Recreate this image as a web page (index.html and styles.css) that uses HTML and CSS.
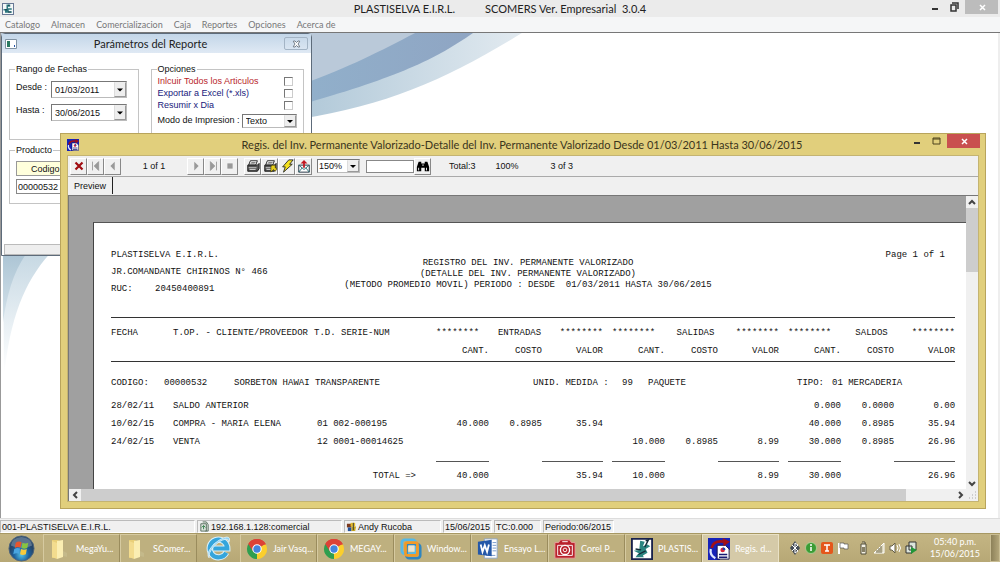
FILE: index.html
```html
<!DOCTYPE html>
<html lang="es">
<head>
<meta charset="utf-8">
<title>SCOMERS Ver. Empresarial</title>
<link rel="stylesheet" href="styles.css">
</head>
<body>
<svg class="defs" aria-hidden="true">
  <defs>
    <symbol id="i-down" viewBox="0 0 10 10"><path d="M2 4h6L5 7z" fill="#000"/></symbol>
    <symbol id="i-folder" viewBox="0 0 22 22">
      <path d="M3 2h6l2 2v16H3z" fill="#e9cf78"/><path d="M8 3l6-1v17l-6 2z" fill="#fbeeb2"/>
      <path d="M3 3l5 2v16l-5-2z" fill="#f3dc8e"/><path d="M14 13l4 2v4l-4-1z" fill="#c4b98a"/>
    </symbol>
    <symbol id="i-chrome" viewBox="0 0 24 24">
      <path d="M12 12L2.500 6.500A11 11 0 0 1 21.500 6.500z" fill="#dd4236"/>
      <path d="M12 12L21.500 6.500A11 11 0 0 1 12 23z" fill="#fbcf2c"/>
      <path d="M12 12L12 23A11 11 0 0 1 2.500 6.500z" fill="#2f9e4f"/>
      <path d="M12 7h9.800A11 11 0 0 0 2.500 6.500L7.500 14.500z" fill="#dd4236"/>
      <circle cx="12" cy="12" r="5.200" fill="#fff"/><circle cx="12" cy="12" r="4" fill="#4384dd"/>
    </symbol>
    <symbol id="i-app" viewBox="0 0 16 16">
      <path d="M.5.5h15v15H.5z" fill="#f4f8f8" stroke="#223a66"/>
      <path d="M6 2h5v3H8v2h5v2H9v2h4v2H4v-3H2V8h4z" fill="#2f7a80"/>
      <path d="M8 3h2M4 9h3M8 12h4" stroke="#12283c"/>
    </symbol>
    <symbol id="i-report" viewBox="0 0 24 24">
      <path d="M0 0h24v24H0z" fill="#1622b8"/><path d="M13 13h11v11H13z" fill="#c9c1a1"/>
      <path d="M10 8h9l4 4v11H10z" fill="#fff" stroke="#10104c"/>
      <circle cx="16" cy="13" r="2.500" fill="#d7263b"/><path d="M16 13v-3a3 3 0 0 1 3 3z" fill="#1c3da8"/>
      <path d="M12 18h9M12 21h9" stroke="#191970" stroke-width="1.500"/>
      <path d="M4 11C5 6 9 3 17 4" fill="none" stroke="#a01018" stroke-width="3"/><path d="M16 0l8 4-7 5z" fill="#a01018"/>
      <path d="M3 12c-1 5 1 8 5 10" fill="none" stroke="#dfe6ff" stroke-width="2.500"/>
    </symbol>
    <symbol id="i-print" viewBox="0 0 16 16">
      <path d="M5 2h8l-2 5H3z" fill="#fff" stroke="#111"/><path d="M6 4h5M5 5.500h5" stroke="#333" stroke-width=".7"/>
      <path d="M2 7h11l2-2v6l-2 3H2z" fill="#555" stroke="#111"/><path d="M3 10h9M4 12h7" stroke="#ddd"/>
    </symbol>
  </defs>
</svg>

<div class="desktop">
  <header class="titlebar">
    <svg class="app-icon" aria-hidden="true"><use href="#i-app"/></svg>
    <h1><span>PLASTISELVA E.I.R.L.</span><span>SCOMERS Ver. Empresarial&nbsp; 3.0.4</span></h1>
    <div class="caption-buttons">
      <button aria-label="Minimizar"><svg viewBox="0 0 16 14"><path d="M5 9h6" stroke="#333" stroke-width="2"/></svg></button>
      <button aria-label="Restaurar"><svg viewBox="0 0 16 14"><path d="M5 5h5v6H5zM6 3h6v6" fill="none" stroke="#333" stroke-width="1.500"/></svg></button>
      <button class="caption-close" aria-label="Cerrar"><svg viewBox="0 0 16 14"><path d="M6 5l5 5M11 5l-5 5" stroke="#fff" stroke-width="1.500"/></svg></button>
    </div>
  </header>

  <nav class="menubar">
    <a href="#">Catalogo</a><a href="#">Almacen</a><a href="#">Comercializacion</a><a href="#">Caja</a><a href="#">Reportes</a><a href="#">Opciones</a><a href="#">Acerca de</a>
  </nav>

  <main class="workspace">
    <svg class="wallpaper" viewBox="0 0 1000 486" preserveAspectRatio="xMinYMin slice" aria-hidden="true">
      <defs>
        <linearGradient id="g1" x1="300" x2="522" y1="0" y2="0" gradientUnits="userSpaceOnUse"><stop offset="0" stop-color="#b0c8d8"/><stop offset="1" stop-color="#e2eaf0"/></linearGradient>
        <linearGradient id="g2" x1="300" x2="473" y1="0" y2="0" gradientUnits="userSpaceOnUse"><stop offset="0" stop-color="#91b0cb"/><stop offset="1" stop-color="#8fa5c3"/></linearGradient>
        <linearGradient id="g3" x1="0" x2="0" y1="220" y2="340" gradientUnits="userSpaceOnUse"><stop offset="0" stop-color="#c6d8e3"/><stop offset="1" stop-color="#fff"/></linearGradient>
        <linearGradient id="g4" x1="0" x2="0" y1="220" y2="300" gradientUnits="userSpaceOnUse"><stop offset="0" stop-color="#abc4d4"/><stop offset="1" stop-color="#dde8ee"/></linearGradient>
      </defs>
      <path d="M0 0H522C450 44 390 72 300 86L0 200z" fill="url(#g1)"/>
      <path d="M0 0H473C430 30 390 46 300 72L0 100z" fill="url(#g2)"/>
      <path d="M0 0H415C380 18 350 34 300 52L0 90z" fill="#bac9d9"/>
      <path d="M2 220H50C24 248 9 285 3 345z" fill="url(#g3)"/>
      <path d="M2 220H26C12 240 6 262 2 290z" fill="url(#g4)"/>
    </svg>

    <section class="params">
      <div class="params-title">
        <svg class="form-icon" viewBox="0 0 12 10" aria-hidden="true"><path d="M.5.5h11v9H.5z" fill="#fff" stroke="#8294a4"/><path d="M2 2h3v6H2z" fill="#2c7a62"/><path d="M9 6h1v2H9z" fill="#2255aa"/></svg>
        <h2>Parámetros del Reporte</h2>
        <button aria-label="Cerrar"><svg viewBox="0 0 12 10"><path d="M2 1h2l2 2 2-2h2v1L8 5l2 3v1H8L6 7 4 9H2V8l2-3-2-3z" fill="#fff" stroke="#4e5966"/></svg></button>
      </div>
      <form class="params-body">
        <div class="params-top">
          <fieldset class="dates">
            <legend>Rango de Fechas</legend>
            <label for="desde">Desde :</label>
            <span class="combo"><select id="desde"><option>01/03/2011</option></select><svg><use href="#i-down"/></svg></span>
            <label for="hasta">Hasta :</label>
            <span class="combo"><select id="hasta"><option>30/06/2015</option></select><svg><use href="#i-down"/></svg></span>
          </fieldset>
          <fieldset class="options">
            <legend>Opciones</legend>
            <div class="check red"><label for="c1">Inlcuir Todos los Articulos</label><input type="checkbox" id="c1"></div>
            <div class="check"><label for="c2">Exportar a Excel (*.xls)</label><input type="checkbox" id="c2"></div>
            <div class="check"><label for="c3">Resumir x Dia</label><input type="checkbox" id="c3"></div>
            <div class="mode"><label for="modo">Modo de Impresion :</label>
            <span class="combo"><select id="modo"><option>Texto</option></select><svg><use href="#i-down"/></svg></span></div>
          </fieldset>
        </div>
        <fieldset class="product">
          <legend>Producto</legend>
          <label class="code-head" for="codigo">Codigo</label>
          <input id="codigo" type="text" value="00000532">
        </fieldset>
      </form>
      <div class="params-status"></div>
    </section>

    <section class="report-window">
      <div class="report-title">
        <svg class="report-icon" aria-hidden="true"><use href="#i-report"/></svg>
        <h2>Regis. del Inv. Permanente Valorizado-Detalle del Inv. Permanente Valorizado Desde 01/03/2011 Hasta 30/06/2015</h2>
        <div class="caption-buttons">
          <button aria-label="Minimizar"><svg viewBox="0 0 16 14"><path d="M5 9h6" stroke="#333" stroke-width="2"/></svg></button>
          <button aria-label="Maximizar"><svg viewBox="0 0 16 14"><path d="M5 4h7v6H5zM5 5h7" fill="none" stroke="#4c431c"/></svg></button>
          <button class="caption-close" aria-label="Cerrar"><svg viewBox="0 0 16 14"><path d="M6 5l5 5M11 5l-5 5" stroke="#fff" stroke-width="1.500"/></svg></button>
        </div>
      </div>
      <div class="report-client">
        <div class="toolbar">
          <div class="tools">
            <button aria-label="Cerrar vista"><svg viewBox="0 0 16 16"><path d="M4 4l8 8M12 4l-8 8" stroke="#a00d12" stroke-width="2.500"/></svg></button>
            <button aria-label="Primera"><svg viewBox="0 0 16 16"><path d="M4 3v10M6 8l5-5v10z" stroke="#999" fill="#999"/></svg></button>
            <button aria-label="Anterior"><svg viewBox="0 0 16 16"><path d="M5 8l5-5v10z" fill="#999"/></svg></button>
          </div>
          <span class="page-no">1 of 1</span>
          <div class="tools">
            <button aria-label="Siguiente"><svg viewBox="0 0 16 16"><path d="M11 8L6 3v10z" fill="#999"/></svg></button>
            <button aria-label="Última"><svg viewBox="0 0 16 16"><path d="M12 3v10M10 8L5 3v10z" stroke="#999" fill="#999"/></svg></button>
            <button aria-label="Detener"><svg viewBox="0 0 16 16"><path d="M5 5h6v6H5z" fill="#999"/></svg></button>
          </div>
          <div class="tools">
            <button aria-label="Imprimir"><svg><use href="#i-print"/></svg></button>
            <button aria-label="Configurar impresora"><svg viewBox="0 0 16 16"><use href="#i-print"/><path d="M10 7h4v3l2 1-2 3-2-2-3 3V9z" fill="#e6cf1e" stroke="#3d3500" stroke-width=".7"/></svg></button>
            <button aria-label="Actualizar"><svg viewBox="0 0 16 16"><path d="M10 1h5l-4 5h3L4 15l2-6H3z" fill="#f4e11f" stroke="#222"/></svg></button>
            <button aria-label="Exportar"><svg viewBox="0 0 16 16"><path d="M2 7h12v8H2z" fill="#fff" stroke="#123"/><path d="M2 7l6 5 6-5M2 15l4-5M14 15l-4-5" fill="none" stroke="#1c6a70"/><path d="M7 10V5H4l4-4 4 4H9v5z" fill="#c01822"/></svg></button>
          </div>
          <span class="combo zoom"><select aria-label="Zoom"><option>150%</option></select><svg><use href="#i-down"/></svg></span>
          <input class="search" type="text" aria-label="Buscar texto">
          <div class="tools"><button aria-label="Buscar"><svg viewBox="0 0 16 16"><path d="M3 3h3v2h4V3h3l2 6v5h-5v-4H6v4H1V9z" fill="#000"/><path d="M3 10v3M12 10v3M8 6v2" stroke="#fff"/></svg></button></div>
          <span class="total">Total:3</span><span class="pct">100%</span><span>3 of 3</span>
        </div>
        <div class="tabs"><button>Preview</button></div>
        <div class="viewer">
          <div class="canvas">
            <article class="paper">
              <header class="paper-head">
                <div class="company"><p>PLASTISELVA E.I.R.L.</p><p>JR.COMANDANTE CHIRINOS N° 466</p><p><span class="ruc">RUC:</span>20450400891</p></div>
                <div class="heading"><p>REGISTRO DEL INV. PERMANENTE VALORIZADO</p><p>(DETALLE DEL INV. PERMANENTE VALORIZADO)</p><p>(METODO PROMEDIO MOVIL) PERIODO : DESDE&nbsp; 01/03/2011 HASTA 30/06/2015</p></div>
                <p class="page-of">Page 1 of 1</p>
              </header>
              <table class="ledger">
                <colgroup><col class="w-date"><col class="w-op"><col class="w-doc"><col class="w-qty"><col class="w-qty"><col class="w-val"><col class="w-gap"><col class="w-qty"><col class="w-qty"><col class="w-val"><col class="w-gap"><col class="w-qty"><col class="w-qty"><col class="w-val"></colgroup>
                <thead>
                  <tr class="groups"><th>FECHA</th><th>T.OP. - CLIENTE/PROVEEDOR</th><th>T.D. SERIE-NUM</th>
                    <th colspan="3"><div class="group"><span>********</span><span>ENTRADAS</span><span>********</span></div></th><th></th>
                    <th colspan="3"><div class="group"><span>********</span><span>SALIDAS</span><span>********</span></div></th><th></th>
                    <th colspan="3"><div class="group"><span>********</span><span>SALDOS</span><span>********</span></div></th></tr>
                  <tr class="cols"><th colspan="3"></th><th>CANT.</th><th>COSTO</th><th>VALOR</th><th></th><th>CANT.</th><th>COSTO</th><th>VALOR</th><th></th><th>CANT.</th><th>COSTO</th><th>VALOR</th></tr>
                </thead>
                <tbody>
                  <tr class="item"><td colspan="14"><div class="item-line"><span>CODIGO:</span><span>00000532</span><span>SORBETON HAWAI TRANSPARENTE</span><span>UNID. MEDIDA :</span><span>99</span><span>PAQUETE</span><span>TIPO:</span><span>01 MERCADERIA</span></div></td></tr>
                  <tr><td>28/02/11</td><td>SALDO ANTERIOR</td><td></td><td></td><td></td><td></td><td></td><td></td><td></td><td></td><td></td><td>0.000</td><td>0.0000</td><td>0.00</td></tr>
                  <tr><td>10/02/15</td><td>COMPRA - MARIA ELENA</td><td>01 002-000195</td><td>40.000</td><td>0.8985</td><td>35.94</td><td></td><td></td><td></td><td></td><td></td><td>40.000</td><td>0.8985</td><td>35.94</td></tr>
                  <tr><td>24/02/15</td><td>VENTA</td><td>12 0001-00014625</td><td></td><td></td><td></td><td></td><td>10.000</td><td>0.8985</td><td>8.99</td><td></td><td>30.000</td><td>0.8985</td><td>26.96</td></tr>
                </tbody>
                <tfoot>
                  <tr class="spacer"><td colspan="14"></td></tr>
                  <tr><td></td><td></td><td class="total-label">TOTAL =&gt;</td><td class="sum">40.000</td><td></td><td class="sum">35.94</td><td></td><td class="sum">10.000</td><td></td><td class="sum">8.99</td><td></td><td class="sum">30.000</td><td></td><td class="sum">26.96</td></tr>
                </tfoot>
              </table>
            </article>
          </div>
          <div class="vbar"><svg viewBox="0 0 12 12"><path d="M3 8l3-3 3 3" fill="none" stroke="#444" stroke-width="2"/></svg><div class="thumb"></div><svg viewBox="0 0 12 12"><path d="M3 5l3 3 3-3" fill="none" stroke="#444" stroke-width="2"/></svg></div>
          <div class="hbar"><svg viewBox="0 0 12 12"><path d="M8 3L5 6l3 3" fill="none" stroke="#444" stroke-width="2"/></svg><div class="thumb"></div><svg viewBox="0 0 12 12"><path d="M5 3l3 3-3 3" fill="none" stroke="#444" stroke-width="2"/></svg></div>
          <svg class="grip" viewBox="0 0 12 12"><path d="M9 3h1M6 6h1M9 6h1M3 9h1M6 9h1M9 9h1" stroke="#aaa"/></svg>
        </div>
      </div>
    </section>
  </main>

  <footer class="statusbar">
    <span class="s-company">001-PLASTISELVA E.I.R.L.</span>
    <span class="s-server"><svg viewBox="0 0 12 12"><path d="M2 3h6v8H2zM4 1h4l2 3v7H7" fill="#dfe5df" stroke="#556b5c"/><path d="M5 9V5M3 7l2-2 2 2" fill="none" stroke="#2e7c46"/></svg>192.168.1.128:comercial</span>
    <span class="s-user"><svg viewBox="0 0 12 12"><path d="M1 3h5v4H1z" fill="#7c3a1e"/><path d="M5 2h5v4H5z" fill="#e3bc2c"/><path d="M2 7h4v4H2z" fill="#26539b"/><path d="M6 6h5l-1 5H6z" fill="#c9a71e"/><path d="M8 2v8" stroke="#333"/></svg>Andy Rucoba</span>
    <span class="s-date">15/06/2015</span>
    <span class="s-rate">TC:0.000</span>
    <span class="s-period">Periodo:06/2015</span>
  </footer>

  <div class="taskbar">
    <button class="start" aria-label="Inicio"><svg viewBox="0 0 28 28"><defs><radialGradient id="orb" cy=".75"><stop offset="0" stop-color="#55c4e8"/><stop offset=".6" stop-color="#1d609c"/><stop offset="1" stop-color="#264669"/></radialGradient></defs><circle cx="14" cy="14" r="13" fill="url(#orb)" stroke="#50657a"/><path d="M3 11a11 9 0 0 1 22 0c-7 3-15 3-22 0z" fill="#fff" opacity=".25"/><path d="M8 8q3-2 6-.5l-1 5.500q-3-1.500-6 .5z" fill="#e8552c"/><path d="M15 8q3 1.500 6 0l-1 5.500q-3 1.500-6 0z" fill="#88c440"/><path d="M6.500 14.500q3-2 6-.5l-1 5.500q-3-1.500-6 .5z" fill="#4aa5e0"/><path d="M13.500 14.500q3 1.500 6 0l-1 5.500q-3 1.500-6 0z" fill="#f8ca3c"/></svg></button>
    <button class="task"><svg><use href="#i-folder"/></svg><span>MegaYu...</span></button>
    <button class="task"><svg><use href="#i-folder"/></svg><span>SComer...</span></button>
    <button class="start" aria-label="Internet Explorer"><svg viewBox="0 0 26 26"><path d="M20.500 17a8.500 8.500 0 1 1 1-4H8" fill="none" stroke="#d9f0fb" stroke-width="6"/><path d="M20.500 17a8.500 8.500 0 1 1 1-4H8" fill="none" stroke="#35a5dc" stroke-width="4"/><path d="M4 22C-1 17 12 3 21 2q4 0 2 5 0-3-3-3C12 5 2 17 4 22z" fill="#8fd3f3" stroke="#e8f6ff" stroke-width=".7"/></svg></button>
    <button class="task"><svg><use href="#i-chrome"/></svg><span>Jair Vasq...</span></button>
    <button class="task"><svg><use href="#i-chrome"/></svg><span>MEGAY...</span></button>
    <button class="task"><svg viewBox="0 0 24 24"><rect x="2" y="2" width="15" height="15" rx="3" fill="none" stroke="#55b9e8" stroke-width="3"/><rect x="7" y="7" width="15" height="15" rx="3" fill="none" stroke="#2f86c0" stroke-width="3"/><rect x="6" y="5" width="13" height="14" rx="2" fill="none" stroke="#f09a28" stroke-width="3"/><rect x="9" y="8" width="7" height="7" fill="#e8e3d0"/></svg><span>Window...</span></button>
    <button class="task"><svg viewBox="0 0 24 24"><path d="M8 1h14v21H8z" fill="#fff" stroke="#8ba5c7"/><path d="M17 5h4M17 8h4M17 11h4M17 14h4M10 19h10" stroke="#6f94c8"/><path d="M1 4l15-2v18L1 18z" fill="#2458a8"/><path d="M4 7l2 8 2.500-7L11 15l2-8" fill="none" stroke="#fff" stroke-width="2"/></svg><span>Ensayo L...</span></button>
    <button class="task"><svg viewBox="0 0 24 24"><path d="M1 5h4l2-3h10l2 3h4v17H1z" fill="#b9212c" stroke="#e9a3a0"/><path d="M4 8h16v11H4z" fill="none" stroke="#fff"/><circle cx="12" cy="13" r="5" fill="#b9212c" stroke="#fff" stroke-width="1.500"/><circle cx="12" cy="13" r="2" fill="none" stroke="#fff"/><path d="M9 4h6" stroke="#fff"/></svg><span>Corel P...</span></button>
    <button class="task"><svg viewBox="0 0 24 24"><path d="M1 1h22v22H1z" fill="#fff" stroke="#19224c" stroke-width="2"/><path d="M10 3l5 1-2 5 5-2 3 2-5 3 2 4-5 3 1 2H5l2-3 2-1-6-3 6-1z" fill="#2c8580"/><path d="M16 3l3-1-4 8M5 12l6 1M8 18l8-4" stroke="#122b38" stroke-width="1.500" fill="none"/></svg><span>PLASTIS...</span></button>
    <button class="task active"><svg><use href="#i-report"/></svg><span>Regis. d...</span></button>
    <div class="tray">
      <svg viewBox="0 0 12 14"><path d="M6 0l5 7-5 7-5-7z" fill="#444b55"/><path d="M3 4l6 6-3 2V2l3 2-6 6" fill="none" stroke="#fff"/></svg>
      <svg viewBox="0 0 12 14"><circle cx="6" cy="7" r="5.500" fill="#3b9c35" stroke="#b8dba3" stroke-width=".7"/><path d="M6 6v4M6 3v2" stroke="#fff" stroke-width="1.500"/></svg>
      <svg viewBox="0 0 12 14"><rect y="1" width="12" height="12" rx="2" fill="#e4571b"/><path d="M3 4h6M6 4v6M4 10h4" stroke="#fff" stroke-width="1.500"/></svg>
      <svg viewBox="0 0 12 14"><path d="M2 2v11" stroke="#fff" stroke-width="2"/><path d="M3 2h4v1h4v5H7V7H3z" fill="#fff" stroke="#555" stroke-width=".7"/></svg>
      <svg class="tray-gap" viewBox="0 0 12 14"><path d="M4 3h5v10H4zM5 1h3v2" fill="#f4f1e4" stroke="#514c39"/><path d="M5 6h3v5H5z" fill="#878066"/></svg>
      <svg viewBox="0 0 12 14"><path d="M1 12h10V2z" fill="#d8d2b6" stroke="#fff"/><path d="M4 9v3M6 7v5M8 5v7" stroke="#746e52"/></svg>
      <svg viewBox="0 0 12 14"><path d="M1 5h2l3-3v10L3 9H1z" fill="#fff" stroke="#666049"/><path d="M8 4q2 3 0 6M10 3q3 4 0 8" fill="none" stroke="#fff"/></svg>
      <svg viewBox="0 0 12 14"><path d="M4 1h7v8H4zM1 5h6v7H1z" fill="#dce5dc" stroke="#333"/><path d="M6 6l6 3-6 4z" fill="#229638"/></svg>
    </div>
    <time class="clock"><span>05:40 p.m.</span><span>15/06/2015</span></time>
    <button class="show-desktop" aria-label="Mostrar escritorio"></button>
  </div>
</div>
</body>
</html>
```
FILE: styles.css
```css
* { box-sizing: border-box; }
body { margin: 0; font: 9px/12px "Liberation Sans", sans-serif; color: #111; }
h1, h2, p { margin: 0; font-weight: normal; }
button, input, select { font: inherit; color: inherit; margin: 0; padding: 0; border: 0; background: none; border-radius: 0; }
.defs { position: absolute; width: 0; height: 0; }
.desktop { display: flex; flex-direction: column; height: 100vh; background: #f0f0f0; overflow: hidden; }

.titlebar { display: flex; align-items: center; height: 17px; background: #ebebeb; padding-left: 2px; }
.app-icon { width: 12px; height: 12px; }
.titlebar h1 { flex: 1; display: flex; justify-content: center; gap: 30px; padding-left: 61px; font: 11px/16px Lato, "Noto Sans", sans-serif; color: #222; }
.caption-buttons { display: flex; align-self: flex-start; }
.caption-buttons button { width: 19px; height: 14px; }
.caption-buttons svg { display: block; width: 16px; height: 14px; margin: 0 auto; }
.caption-buttons .caption-close { width: 33px; margin-left: 2px; }
.titlebar .caption-close { background: #bcbcbc; margin-right: 2px; }

.menubar { display: flex; gap: 11px; height: 16px; padding: 1px 5px 0; background: #f5f6f7; border-bottom: 1px solid #777; font: 9px/13px Lato, "Noto Sans", sans-serif; }
.menubar a { color: #777; text-decoration: none; }

.workspace { position: relative; flex: 1; background: #fff; border-left: 1px solid #999; border-right: 2px solid #eee; overflow: hidden; }
.wallpaper { position: absolute; inset: 0; width: 100%; height: 100%; }

.params { position: absolute; left: 0; top: 0; width: 311px; height: 223px; display: flex; flex-direction: column; background: #fff; border: 1px solid #5d6b7a; border-radius: 4px 4px 0 0; }
.params-title { display: flex; align-items: center; height: 19px; padding: 0 3px; background: linear-gradient(#c3d6e8, #dfe9f4); }
.form-icon { width: 12px; height: 10px; }
.params-title h2 { flex: 1; text-align: center; font: 11px/18px Lato, "Noto Sans", sans-serif; color: #222; }
.params-title button { display: grid; place-items: center; width: 24px; height: 13px; border: 1px solid #a3b4c5; border-radius: 2px; }
.params-title button svg { width: 9px; height: 8px; }
.params-body { flex: 1; padding: 10px 7px 0; }
.params-top { display: flex; gap: 12px; }
fieldset { margin: 0; min-width: 0; border: 1px solid #c4c4c4; padding: 0 6px; }
legend { padding: 0 1px; margin-left: -1px; }
.dates { display: grid; grid-template-columns: 35px 76px; grid-auto-rows: 17px; row-gap: 6px; align-content: start; width: 130px; height: 77px; padding-top: 6px; }
.combo { position: relative; display: block; height: 17px; background: #fff; border: 1px solid #777; border-right-color: #bbb; border-bottom-color: #bbb; }
.combo select { appearance: none; width: 100%; height: 100%; padding-left: 3px; outline: 0; }
.combo svg { position: absolute; right: 0; top: 0; width: 12px; height: 100%; background: #eee; border: 1px solid #999; border-top-color: #eee; border-left-color: #ddd; pointer-events: none; }
.options { width: 154px; height: 77px; }
.check { display: flex; justify-content: space-between; align-items: center; height: 12px; padding-right: 4px; color: #18187c; }
.red { color: #b8252b; }
.check input { appearance: none; width: 9px; height: 9px; background: #fff; border: 1px solid #777; border-right-color: #ccc; border-bottom-color: #ccc; }
.mode { display: flex; justify-content: space-between; gap: 2px; padding-top: 3px; white-space: nowrap; }
.mode .combo { width: 58px; height: 14px; }
.product { margin-top: 4px; height: 60px; padding-top: 5px; }
.code-head { display: block; width: 120px; height: 15px; padding-left: 14px; line-height: 15px; background: #ffffdc; border: 1px solid #999; }
.product input { display: block; width: 120px; height: 15px; margin-top: 3px; padding-left: 1px; border: 1px solid #888; }
.params-status { height: 11px; margin: 0 2px; background: #eee; border: 1px solid #bbb; }

.report-window { position: absolute; left: 59px; right: 12px; top: 100px; bottom: 9px; display: flex; flex-direction: column; padding: 0 6px 6px; background: #e1cf7c; border: 1px solid #b8a45c; }
.report-title { display: flex; align-items: center; height: 21px; }
.report-icon { width: 12px; height: 12px; }
.report-title h2 { flex: 1; padding-left: 58px; text-align: center; font: 11px/20px Lato, "Noto Sans", sans-serif; color: #3b351c; white-space: nowrap; }
.report-title .caption-close { background: #c9504f; }
.report-title .caption-buttons { margin-right: -1px; }
.report-client { flex: 1; min-height: 0; display: flex; flex-direction: column; background: #f0f0f0; border: 1px solid #c4b472; }
.toolbar { display: flex; align-items: center; height: 21px; padding-left: 2px; border-bottom: 1px solid #aaa; }
.tools { display: flex; }
.tools button { display: grid; place-items: center; width: 17px; height: 17px; border: 1px solid; border-color: #fff #888 #888 #fff; }
.tools svg { width: 14px; height: 14px; }
.page-no { width: 66px; text-align: center; }
.page-no + .tools { margin-right: 6px; }
.zoom { width: 43px; height: 14px; margin: 0 6px 0 5px; }
.zoom select { padding-left: 1px; }
.search { width: 48px; height: 13px; background: #fff; border: 1px solid #888; }
.total { margin-left: 18px; }
.pct { margin: 0 32px 0 20px; }
.tabs { height: 18px; }
.tabs button { height: 17px; width: 45px; border-right: 1px solid #222; }

.viewer { flex: 1; min-height: 0; display: grid; grid-template: 1fr 12px / 1fr 12px; border-top: 1px solid #777; border-left: 1px solid #777; }
.canvas { min-width: 0; min-height: 0; overflow: hidden; background: #a0a0a0; padding: 26px 0 0 24px; }
.paper { height: 100%; padding: 27px 12px 0 17px; background: #fff; border-top: 1px solid #555; border-left: 1px solid #444; font: 9px/11px "Liberation Mono", monospace; white-space: nowrap; }
.paper-head { display: grid; grid-template-columns: 1fr auto 1fr; height: 67px; margin-right: 9px; }
.company { display: grid; align-content: start; row-gap: 6px; width: 0; }
.ruc { display: inline-block; width: 44px; }
.heading { padding-top: 8px; text-align: center; }
.page-of { text-align: right; }
.ledger { width: 100%; table-layout: fixed; border-collapse: collapse; }
.w-date { width: 62px; } .w-op { width: 141px; } .w-doc { width: 122px; }
.w-qty { width: 53px; } .w-val { width: 61px; } .w-gap { width: 9px; }
.ledger th, .ledger td { height: 18px; padding: 0; font-weight: normal; text-align: right; }
.ledger th:nth-child(-n+3), .ledger td:nth-child(-n+3) { text-align: left; }
.ledger .cols th { text-align: right; height: 20px; }
.ledger .groups th { height: 24px; padding-top: 7px; }
.ledger thead { border-top: 1px solid #333; border-bottom: 1px solid #333; }
.ledger tbody td:nth-child(3) { padding-left: 3px; }
.group { display: flex; justify-content: space-between; }
.ledger .item td { height: 36px; padding-top: 8px; }
.item-line { display: grid; grid-template-columns: 53px 70px 299px 89px 26px 149px 35px 1fr; }
.ledger .spacer td { height: 10px; }
.ledger tfoot td { height: 29px; }
.ledger tfoot .total-label:nth-child(3) { text-align: right; padding-right: 20px; }
.ledger .sum { border-top: 1px solid #555; }
.vbar { display: flex; flex-direction: column; background: #f0f0f0; }
.hbar { display: flex; background: #f0f0f0; }
.vbar svg, .hbar svg, .grip { width: 12px; height: 12px; flex: none; }
.thumb { background: #cdcdcd; }
.vbar .thumb { height: 22%; margin-bottom: auto; }
.hbar .thumb { width: 92%; margin-right: auto; }

.statusbar { display: flex; gap: 2px; height: 15px; padding-top: 1px; border-top: 1px solid #ddd; background: #f0f0f0; }
.statusbar span { display: flex; align-items: center; gap: 1px; padding-left: 1px; border: 1px solid; border-color: #bbb #fff #fff #bbb; white-space: nowrap; }
.statusbar svg { width: 11px; height: 11px; }
.s-company { width: 195px; } .s-server { width: 145px; } .s-user { width: 97px; } .s-date { width: 49px; } .s-rate { width: 47px; } .s-period { width: 71px; }

.taskbar { display: flex; height: 29px; background: linear-gradient(#c4b583, #b7a876); border-top: 1px solid #a79863; font: 9px/12px Lato, "Noto Sans", sans-serif; color: #fff; }
.start { width: 43px; display: grid; place-items: center; }
.start svg { width: 27px; height: 27px; }
.task { flex: 0 1 77px; min-width: 0; display: flex; align-items: center; gap: 5px; padding-left: 5px; border: 1px solid #d6caa0; border-right-color: #9a8c5d; border-bottom: 0; background: #beb07f; white-space: nowrap; }
.task svg { width: 22px; height: 22px; flex: none; }
.task.active { background: #d5caa8; border-color: #e9e1c5; }
.tray { flex: 1; display: flex; align-items: center; justify-content: space-between; padding: 0 13px 0 10px; }
.tray svg { width: 12px; height: 14px; }
.tray .tray-gap { margin-left: 4px; }
.clock { display: flex; flex-direction: column; justify-content: center; align-items: center; margin-right: 10px; }
.show-desktop { width: 10px; background: linear-gradient(90deg, #8d8159, #b3a67a); border: 1px solid #c9bd93; }
```
